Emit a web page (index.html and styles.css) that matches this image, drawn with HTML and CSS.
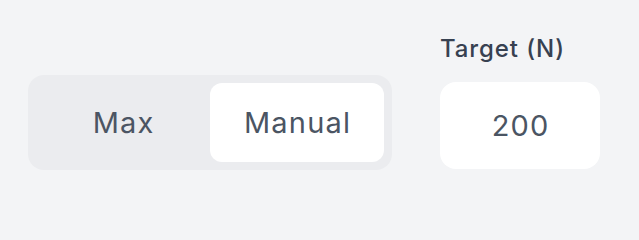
FILE: index.html
```html
<!DOCTYPE html>
<html lang="en">
<head>
<meta charset="utf-8">
<title>Mode</title>
<link rel="stylesheet" href="styles.css">
</head>
<body>
<div class="panel">
  <div class="segmented">
    <button class="seg">Max</button>
    <button class="seg seg-active">Manual</button>
  </div>
  <div class="field">
    <div class="field-label">Target (N)</div>
    <div class="field-box">200</div>
  </div>
</div>
</body>
</html>
```
FILE: styles.css
```css
html, body {
  margin: 0;
  padding: 0;
  background: #f3f4f6;
}
body {
  width: 639px;
  height: 203px;
  font-family: Inter, "Noto Sans", sans-serif;
}
.panel {
  display: flex;
  align-items: flex-start;
  gap: 48px;
  padding: 34px 0 0 28px;
}
.segmented {
  margin-top: 41px;
  display: grid;
  grid-template-columns: 174px 174px;
  padding: 8px;
  background: #ebecef;
  border-radius: 16px;
}
.seg {
  height: 79px;
  border: 0;
  background: transparent;
  font-family: inherit;
  font-size: 29px;
  font-weight: 400;
  letter-spacing: 1.2px;
  color: #4b5563;
  border-radius: 12px;
  padding: 0 0 0 1.2px;
  display: flex;
  align-items: center;
  justify-content: center;
}
.seg-active {
  background: #ffffff;
}
.field {
  display: flex;
  flex-direction: column;
}
.field-label {
  font-size: 24px;
  line-height: 30px;
  font-weight: 500;
  letter-spacing: 0.9px;
  color: #374151;
  margin-bottom: 18px;
}
.field-box {
  width: 160px;
  height: 87px;
  background: #ffffff;
  border-radius: 16px;
  display: flex;
  align-items: center;
  justify-content: center;
  font-size: 29px;
  letter-spacing: 1.2px;
  padding-left: 1.2px;
  box-sizing: border-box;
  color: #4b5563;
}
```
